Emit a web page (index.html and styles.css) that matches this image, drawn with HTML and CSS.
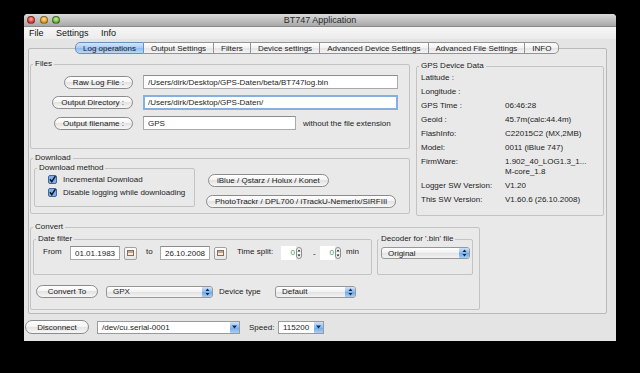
FILE: index.html
```html
<!DOCTYPE html>
<html lang="en">
<head>
    <meta charset="UTF-8">
    <title>BT747 Application</title>
    <link rel="stylesheet" href="styles.css">
</head>
<body>

<div class="window">
    <div class="titlebar">
        <div class="lights">
            <span class="light red"></span>
            <span class="light yellow"></span>
            <span class="light green"></span>
        </div>
        <div class="title">BT747 Application</div>
    </div>

    <div class="menubar">
        <span>File</span>
        <span>Settings</span>
        <span>Info</span>
    </div>

    <div class="tabs">
        <span class="tab active">Log operations</span>
        <span class="tab">Output Settings</span>
        <span class="tab">Filters</span>
        <span class="tab">Device settings</span>
        <span class="tab">Advanced Device Settings</span>
        <span class="tab">Advanced File Settings</span>
        <span class="tab">INFO</span>
    </div>

    <div class="pane">
        <fieldset class="group files">
            <legend>Files</legend>
            <div class="filegrid">
                <button class="btn">Raw Log File :</button>
                <input class="field wide" value="/Users/dirk/Desktop/GPS-Daten/beta/BT747log.bin">
                <button class="btn">Output Directory :</button>
                <input class="field wide focus" value="/Users/dirk/Desktop/GPS-Daten/">
                <button class="btn">Output filename :</button>
                <div class="nameline">
                    <input class="field short" value="GPS">
                    <span>without the file extension</span>
                </div>
            </div>
        </fieldset>

        <fieldset class="group gps">
            <legend>GPS Device Data</legend>
            <div class="gpsgrid">
                <span>Latitude :</span><span></span>
                <span>Longitude :</span><span></span>
                <span>GPS Time :</span><span>06:46:28</span>
                <span>Geoid :</span><span>45.7m(calc:44.4m)</span>
                <span>FlashInfo:</span><span>C22015C2 (MX,2MB)</span>
                <span>Model:</span><span>0011 (iBlue 747)</span>
                <span>FirmWare:</span><span>1.902_40_LOG1.3_1...<br>M-core_1.8</span>
                <span>Logger SW Version:</span><span>V1.20</span>
                <span>This SW Version:</span><span>V1.60.6 (26.10.2008)</span>
            </div>
        </fieldset>

        <fieldset class="group download">
            <legend>Download</legend>
            <div class="dl-body">
                <fieldset class="group method">
                    <legend>Download method</legend>
                    <label class="check">
                        <svg width="9" height="9" viewBox="0 0 9 9"><rect x="0.5" y="0.5" width="8" height="8" rx="1.5" fill="#7eaee9" stroke="#41679e"/><path d="M2 4.3 L3.8 6.6 L7.4 1.2" fill="none" stroke="#101820" stroke-width="1.5"/></svg>
                        Incremental Download
                    </label>
                    <label class="check">
                        <svg width="9" height="9" viewBox="0 0 9 9"><rect x="0.5" y="0.5" width="8" height="8" rx="1.5" fill="#7eaee9" stroke="#41679e"/><path d="M2 4.3 L3.8 6.6 L7.4 1.2" fill="none" stroke="#101820" stroke-width="1.5"/></svg>
                        Disable logging while downloading
                    </label>
                </fieldset>
                <div class="dl-buttons">
                    <button class="btn first">iBlue / Qstarz / Holux / Konet</button>
                    <button class="btn">PhotoTrackr / DPL700 / iTrackU-Nemerix/SIRFIII</button>
                </div>
            </div>
        </fieldset>

        <fieldset class="group convert">
            <legend>Convert</legend>
            <div class="conv-top">
                <fieldset class="group datefilter">
                    <legend>Date filter</legend>
                    <div class="daterow">
                        <span class="lbl-from">From</span>
                        <input class="field date" value="01.01.1983">
                        <span class="calbtn"><svg width="7" height="6" viewBox="0 0 7 6"><rect x="0.5" y="0.5" width="6" height="5" fill="#efe9e0" stroke="#8f6a55"/><path d="M0.5 2 H6.5" stroke="#8f6a55"/></svg></span>
                        <span class="lbl-to">to</span>
                        <input class="field date" value="26.10.2008">
                        <span class="calbtn"><svg width="7" height="6" viewBox="0 0 7 6"><rect x="0.5" y="0.5" width="6" height="5" fill="#efe9e0" stroke="#8f6a55"/><path d="M0.5 2 H6.5" stroke="#8f6a55"/></svg></span>
                        <span class="lbl-split">Time split:</span>
                        <span class="spin">
                            <span class="spin-field">0</span>
                            <svg width="6" height="12" viewBox="0 0 6 12"><rect x="0.5" y="0.5" width="5" height="11" rx="2.5" fill="#f4f4f4" stroke="#8d8d8d"/><path d="M1.5 4.5 L3 2.5 L4.5 4.5 Z M1.5 7.5 L3 9.5 L4.5 7.5 Z" fill="#222"/></svg>
                        </span>
                        <span class="lbl-dash">-</span>
                        <span class="spin">
                            <span class="spin-field">0</span>
                            <svg width="6" height="12" viewBox="0 0 6 12"><rect x="0.5" y="0.5" width="5" height="11" rx="2.5" fill="#f4f4f4" stroke="#8d8d8d"/><path d="M1.5 4.5 L3 2.5 L4.5 4.5 Z M1.5 7.5 L3 9.5 L4.5 7.5 Z" fill="#222"/></svg>
                        </span>
                        <span class="lbl-min">min</span>
                    </div>
                </fieldset>
                <fieldset class="group decoder">
                    <legend>Decoder for '.bin' file</legend>
                    <div class="select decsel">
                        <span>Original</span>
                        <span class="arrows"><svg width="5" height="8" viewBox="0 0 5 8"><path d="M0.5 3 L2.5 0.6 L4.5 3 Z M0.5 5 L2.5 7.4 L4.5 5 Z" fill="#142a4c"/></svg></span>
                    </div>
                </fieldset>
            </div>
            <div class="conv-row">
                <button class="btn convbtn">Convert To</button>
                <div class="select gpxsel">
                    <span>GPX</span>
                    <span class="arrows"><svg width="5" height="8" viewBox="0 0 5 8"><path d="M0.5 3 L2.5 0.6 L4.5 3 Z M0.5 5 L2.5 7.4 L4.5 5 Z" fill="#142a4c"/></svg></span>
                </div>
                <span class="lbl-device">Device type</span>
                <div class="select devsel">
                    <span>Default</span>
                    <span class="arrows"><svg width="5" height="8" viewBox="0 0 5 8"><path d="M0.5 3 L2.5 0.6 L4.5 3 Z M0.5 5 L2.5 7.4 L4.5 5 Z" fill="#142a4c"/></svg></span>
                </div>
            </div>
        </fieldset>
    </div>

    <div class="statusbar">
        <button class="btn disc">Disconnect</button>
        <div class="combo port">
            <span>/dev/cu.serial-0001</span>
            <span class="drop"><svg width="5" height="4" viewBox="0 0 5 4"><path d="M0 0.5 L5 0.5 L2.5 3.5 Z" fill="#142a4c"/></svg></span>
        </div>
        <span class="lbl-speed">Speed:</span>
        <div class="combo speed">
            <span>115200</span>
            <span class="drop"><svg width="5" height="4" viewBox="0 0 5 4"><path d="M0 0.5 L5 0.5 L2.5 3.5 Z" fill="#142a4c"/></svg></span>
        </div>
    </div>
</div>

</body>
</html>
```

FILE: styles.css
```css
body {
    margin: 0;
    height: 373px;
    overflow: hidden;
    background-color: #000000;
    font-family: "Liberation Sans", Arial, sans-serif;
    font-size: 8px;
    color: #1c1c1c;
}

.window {
    width: 592px;
    height: 327px;
    margin: 14px 0 0 24px;
    background-color: #e4e4e4;
    border-radius: 4px 4px 0 0;
    overflow: hidden;
}

/* title bar */
.titlebar {
    display: grid;
    height: 13px;
    background: linear-gradient(#dadada, #a8a8a8);
    border-bottom: 1px solid #8a8a8a;
    box-sizing: border-box;
}

.lights,
.title {
    grid-area: 1 / 1;
}

.lights {
    display: flex;
    align-items: center;
    gap: 4.5px;
    padding-left: 3px;
}

.light {
    width: 8px;
    height: 8px;
    border-radius: 50%;
    box-sizing: border-box;
    border: 1px solid rgba(0, 0, 0, 0.35);
}

.red {
    background: radial-gradient(circle at 50% 35%, #ffb0a8, #d8453c 60%, #a8261f);
}

.yellow {
    background: radial-gradient(circle at 50% 35%, #ffe2a0, #e0a12c 60%, #a8701a);
}

.green {
    background: radial-gradient(circle at 50% 35%, #d5f5a8, #6db23a 60%, #3f7a1f);
}

.title {
    text-align: center;
    font-size: 9px;
    line-height: 12px;
    color: #2a2a2a;
}

/* menu */
.menubar {
    height: 12px;
    line-height: 12px;
    padding-left: 5px;
    font-size: 9px;
    background: linear-gradient(#f6f6f6, #ececec);
    color: #111;
}

.menubar span {
    margin-right: 10px;
}

/* tabs */
.tabs {
    position: relative;
    z-index: 1;
    display: flex;
    margin: 3px 0 0 51px;
    height: 12px;
}

.tab {
    height: 12px;
    line-height: 11px;
    padding: 0 7px;
    box-sizing: border-box;
    border: 1px solid #939393;
    border-left: none;
    background: linear-gradient(#ffffff, #f1f1f1 50%, #e4e4e4 50%, #f4f4f4);
    color: #1c1c1c;
}

.tab:first-child {
    border-left: 1px solid #939393;
    border-radius: 5px 0 0 5px;
}

.tab:last-child {
    border-radius: 0 5px 5px 0;
}

.tab.active {
    background: linear-gradient(#d3e6fa, #a7cbf3 50%, #8bbaf0 50%, #b9d8f8);
    border-color: #6f8fb8;
}

/* tab content */
.pane {
    display: grid;
    grid-template-columns: 380px 6px 64px 124px;
    grid-template-rows: 90px 61px 92px;
    row-gap: 4px;
    width: 579px;
    height: 266px;
    margin: -6px 0 0 4px;
    padding: 10px 0 0 1px;
    box-sizing: border-box;
    border: 1px solid #b9b9b9;
    border-radius: 2px;
    background-color: #e9e9e9;
}

.group {
    margin: 0;
    padding: 0;
    min-width: 0;
    box-sizing: border-box;
    border: 1px solid #c3c3c3;
    border-radius: 2px;
}

.group legend {
    margin-left: 2px;
    padding: 0 2px;
    line-height: 10px;
    color: #222;
}

.files {
    grid-column: 1;
    grid-row: 1;
}

.gps {
    grid-column: 3 / 5;
    grid-row: 1 / 3;
    height: 155px;
    margin-top: 2px;
}

.download {
    grid-column: 1;
    grid-row: 2;
}

.convert {
    grid-column: 1 / 4;
    grid-row: 3;
    margin-top: 4px;
}

/* buttons and fields */
.btn {
    font: inherit;
    height: 13px;
    line-height: 11px;
    padding: 0 8px;
    border: 1px solid #8b8b8b;
    border-radius: 7px;
    background: linear-gradient(#ffffff, #f3f3f3 50%, #e3e3e3 50%, #f7f7f7);
    color: #1c1c1c;
    white-space: nowrap;
}

.field {
    font: inherit;
    height: 14px;
    box-sizing: border-box;
    padding: 0 4px;
    border: 1px solid #a9a9a9;
    border-top-color: #8c8c8c;
    background-color: #ffffff;
    color: #1c1c1c;
    outline: none;
}

.field.focus {
    height: 15px;
    padding: 0 3px;
    border: 2px solid #86aedf;
}

.filegrid {
    display: grid;
    grid-template-columns: 102px auto;
    column-gap: 10px;
    row-gap: 6px;
    align-items: center;
    justify-items: end;
    padding-top: 6px;
}

.filegrid > :nth-child(even) {
    justify-self: start;
}

.wide {
    width: 255px;
}

.nameline {
    display: flex;
    align-items: center;
    gap: 7px;
}

.short {
    width: 153px;
}

/* GPS data */
.gpsgrid {
    display: grid;
    grid-template-columns: 84px auto;
    row-gap: 4px;
    line-height: 10px;
    padding: 2px 0 0 4px;
}

/* download */
.dl-body {
    display: flex;
    padding-left: 3px;
}

.method {
    width: 161px;
    height: 44px;
}

.check {
    display: flex;
    align-items: center;
    gap: 6px;
    height: 13px;
    padding-left: 13px;
}

.dl-buttons {
    display: flex;
    flex-direction: column;
    align-items: flex-start;
    gap: 8px;
    margin-left: 11px;
    padding-top: 11px;
}

.dl-buttons .first {
    margin-left: 2px;
}

/* convert */
.conv-top {
    display: flex;
    gap: 5px;
    padding: 2px 0 0 2px;
}

.datefilter {
    width: 339px;
    height: 41px;
}

.decoder {
    width: 96px;
    height: 41px;
}

.decoder legend {
    margin-left: 1px;
}

.daterow {
    display: flex;
    align-items: center;
    height: 14px;
    margin-top: 2px;
    padding-left: 9px;
}

.lbl-from {
    width: 27px;
    margin-top: -3px;
}

.date {
    width: 50px;
}

.calbtn {
    display: flex;
    align-items: center;
    justify-content: center;
    width: 13px;
    height: 13px;
    margin-left: 4px;
    box-sizing: border-box;
    border: 1px solid #a0a0a0;
    border-radius: 2px;
    background: linear-gradient(#ffffff, #e6e6e6);
}

.lbl-to {
    width: 14px;
    margin: -3px 0 0 9px;
}

.lbl-split {
    width: 44px;
    margin: -3px 0 0 10px;
}

.spin {
    display: flex;
    align-items: center;
}

.spin-field {
    width: 15px;
    height: 14px;
    line-height: 14px;
    padding-right: 1px;
    box-sizing: border-box;
    text-align: right;
    background-color: #ffffff;
    color: #3f9a3f;
}

.lbl-dash {
    width: 7px;
    margin-left: 11px;
}

.lbl-min {
    margin: -3px 0 0 5px;
}

.select {
    display: flex;
    align-items: center;
    justify-content: space-between;
    height: 12px;
    box-sizing: border-box;
    padding-left: 6px;
    border: 1px solid #979797;
    border-radius: 3px;
    background: linear-gradient(#ffffff, #f0f0f0 50%, #e2e2e2 50%, #f3f3f3);
}

.arrows {
    display: flex;
    align-items: center;
    justify-content: center;
    width: 10px;
    height: 100%;
    border-radius: 0 2px 2px 0;
    background: linear-gradient(#cfe3fa, #8ab9ef 50%, #6ea7ea 50%, #a8cef6);
}

.decsel {
    width: 89px;
    margin: 3px 0 0 3px;
}

.conv-row {
    display: flex;
    align-items: center;
    height: 13px;
    margin-top: 10px;
    padding-left: 5px;
}

.convbtn {
    width: 62px;
}

.gpxsel {
    width: 107px;
    margin-left: 8px;
}

.lbl-device {
    margin-left: 6px;
    width: 56px;
}

.devsel {
    width: 81px;
}

/* bottom bar */
.statusbar {
    display: flex;
    align-items: center;
    height: 14px;
    margin-top: 6px;
    padding-left: 1px;
}

.disc {
    width: 64px;
    height: 14px;
}

.combo {
    display: flex;
    align-items: center;
    justify-content: space-between;
    height: 13px;
    box-sizing: border-box;
    padding-left: 4px;
    border: 1px solid #9a9a9a;
    background-color: #ffffff;
}

.drop {
    display: flex;
    align-items: center;
    justify-content: center;
    width: 9px;
    height: 100%;
    background: linear-gradient(#cfe3fa, #8ab9ef 50%, #6ea7ea 50%, #a8cef6);
}

.port {
    width: 143px;
    margin-left: 8px;
}

.lbl-speed {
    width: 29px;
    margin-left: 9px;
}

.speed {
    width: 46px;
}
```
